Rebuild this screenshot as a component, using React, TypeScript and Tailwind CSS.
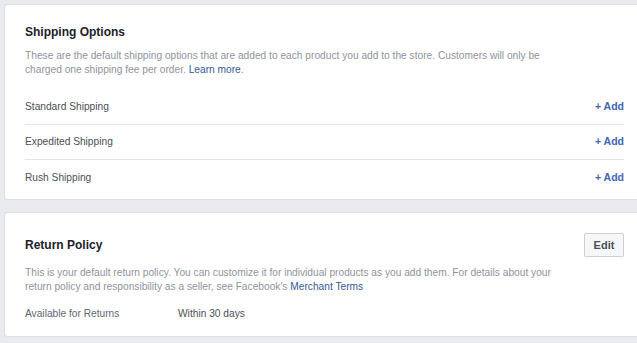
const rows = ["Standard Shipping", "Expedited Shipping", "Rush Shipping"];

export default function App() {
  return (
    <div
      className="h-[343px] w-[637px] overflow-hidden bg-[#e9ebee] pl-[4px] pt-[4px] flex flex-col gap-[12px]"
      style={{ fontFamily: '"Liberation Sans", Arial, sans-serif' }}
    >
      <section className="bg-white border border-r-0 border-[#dddfe2] rounded-l-[3px] pl-[20px] pr-[13px] pt-[18px] pb-[4px]">
        <h2 className="text-[12px] leading-[18px] font-bold text-[#1d2129]">Shipping Options</h2>
        <p className="mt-[8px] text-[10.2px] leading-[14px] text-[#90949c]">
          These are the default shipping options that are added to each product you add to the store. Customers will only be
          <br />
          charged one shipping fee per order. <span className="text-[#365899]">Learn more</span>.
        </p>
        <div className="mt-[13px]">
          {rows.map((r, i) => (
            <div
              key={r}
              className={`flex items-center justify-between h-[35px] ${
                i < rows.length - 1 ? "border-b border-[#e5e5e5]" : ""
              }`}
            >
              <span className="text-[10.2px] text-[#4b4f56]">{r}</span>
              <span className="text-[10.5px] font-bold text-[#4267b2]">+ Add</span>
            </div>
          ))}
        </div>
      </section>

      <section className="bg-white border border-r-0 border-[#dddfe2] rounded-l-[3px] pl-[20px] pr-[13px] pt-[20px] pb-[15px]">
        <div className="flex items-center justify-between">
          <h2 className="text-[12px] leading-[18px] font-bold text-[#1d2129]">Return Policy</h2>
          <button className="h-[24px] w-[40px] rounded-[2px] border border-[#ced0d4] bg-[#f6f7f9] text-[11px] font-bold text-[#4b4f56]">
            Edit
          </button>
        </div>
        <p className="mt-[9px] text-[10.2px] leading-[14px] text-[#90949c]">
          This is your default return policy. You can customize it for individual products as you add them. For details about your
          <br />
          return policy and responsibility as a seller, see Facebook's <span className="text-[#365899]">Merchant Terms</span>
        </p>
        <div className="mt-[13px] flex text-[10.2px] leading-[14px] text-[#4b4f56]">
          <span className="w-[153px] text-[#606770]">Available for Returns</span>
          <span>Within 30 days</span>
        </div>
      </section>
    </div>
  );
}
